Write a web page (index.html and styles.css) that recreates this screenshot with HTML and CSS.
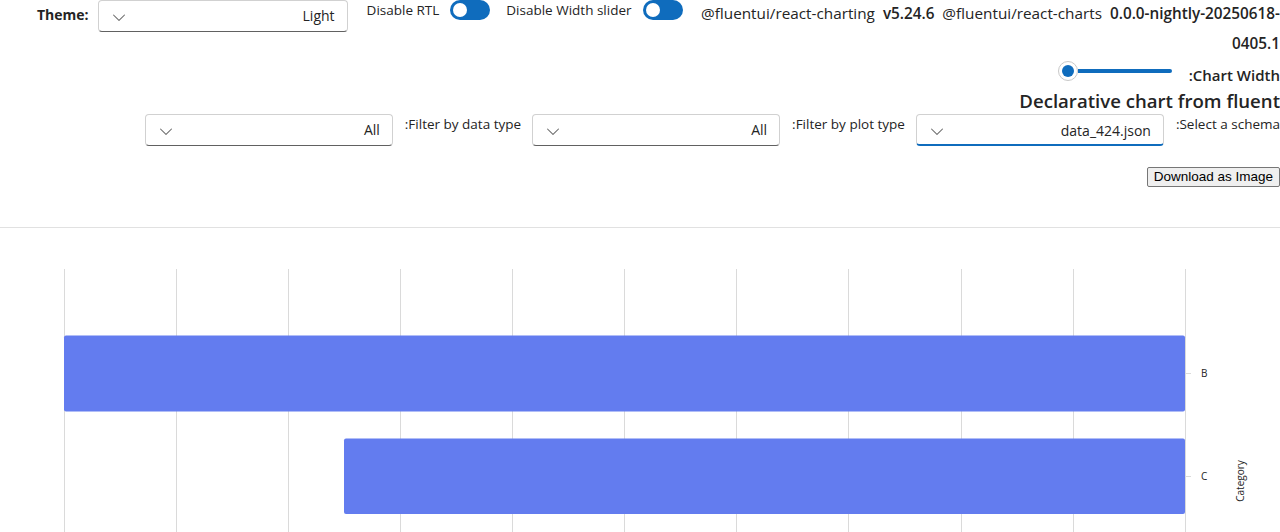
FILE: index.html
```html
<!DOCTYPE html>
<html>
<head>
<meta charset="utf-8">
<link rel="stylesheet" href="styles.css">
</head>
<body>
<div class="top">
  <span class="theme-label">Theme:</span>
  <div class="dropdown theme-dd">
    <svg class="chev" width="20" height="20" viewBox="0 0 20 20"><path d="M15.85 7.65a.5.5 0 0 1 0 .7l-5.5 5.5a.5.5 0 0 1-.7 0l-5.5-5.5a.5.5 0 0 1 .7-.7L10 12.79l5.15-5.14a.5.5 0 0 1 .7 0Z" fill="#616161"/></svg>
    <span class="dd-value">Light</span>
  </div>
  <div class="switch-group">
    <span>Disable RTL</span>
    <span class="switch"><span class="knob"></span></span>
  </div>
  <div class="switch-group">
    <span>Disable Width slider</span>
    <span class="switch"><span class="knob"></span></span>
  </div>
  <div class="versions">@fluentui/react-charting&nbsp; <b>v5.24.6</b>&nbsp; @fluentui/react-charts&nbsp; <b>0.0.0-nightly-20250618-0405.1</b></div>
</div>

<div class="slider-row">
  <div class="slider">
    <span class="thumb"><span class="thumb-dot"></span></span>
    <span class="track"></span>
  </div>
  <span class="slider-label">:Chart Width</span>
</div>

<h2 class="title">Declarative chart from fluent</h2>

<div class="filters">
  <div class="dropdown filter-dd">
    <svg class="chev" width="20" height="20" viewBox="0 0 20 20"><path d="M15.85 7.65a.5.5 0 0 1 0 .7l-5.5 5.5a.5.5 0 0 1-.7 0l-5.5-5.5a.5.5 0 0 1 .7-.7L10 12.79l5.15-5.14a.5.5 0 0 1 .7 0Z" fill="#616161"/></svg>
    <span class="dd-value">All</span>
  </div>
  <span class="filter-label">:Filter by data type</span>
  <div class="dropdown filter-dd">
    <svg class="chev" width="20" height="20" viewBox="0 0 20 20"><path d="M15.85 7.65a.5.5 0 0 1 0 .7l-5.5 5.5a.5.5 0 0 1-.7 0l-5.5-5.5a.5.5 0 0 1 .7-.7L10 12.79l5.15-5.14a.5.5 0 0 1 .7 0Z" fill="#616161"/></svg>
    <span class="dd-value">All</span>
  </div>
  <span class="filter-label">:Filter by plot type</span>
  <div class="dropdown filter-dd focused">
    <svg class="chev" width="20" height="20" viewBox="0 0 20 20"><path d="M15.85 7.65a.5.5 0 0 1 0 .7l-5.5 5.5a.5.5 0 0 1-.7 0l-5.5-5.5a.5.5 0 0 1 .7-.7L10 12.79l5.15-5.14a.5.5 0 0 1 .7 0Z" fill="#616161"/></svg>
    <span class="dd-value">data_424.json</span>
  </div>
  <span class="filter-label">:Select a schema</span>
</div>

<div class="download-row">
  <button class="download">Download as Image</button>
</div>

<hr class="divider">

<svg class="chart" width="1280" height="310" viewBox="0 0 1280 310">
  <g stroke="#dadada" stroke-width="1">
    <line x1="64.5" y1="40" x2="64.5" y2="310"/>
    <line x1="176.5" y1="40" x2="176.5" y2="310"/>
    <line x1="288.5" y1="40" x2="288.5" y2="310"/>
    <line x1="400.5" y1="40" x2="400.5" y2="310"/>
    <line x1="512.5" y1="40" x2="512.5" y2="310"/>
    <line x1="624.5" y1="40" x2="624.5" y2="310"/>
    <line x1="736.5" y1="40" x2="736.5" y2="310"/>
    <line x1="848.5" y1="40" x2="848.5" y2="310"/>
    <line x1="961.5" y1="40" x2="961.5" y2="310"/>
    <line x1="1073.5" y1="40" x2="1073.5" y2="310"/>
    <line x1="1185.5" y1="40" x2="1185.5" y2="310"/>
    <line x1="1185" y1="144.5" x2="1191" y2="144.5"/>
    <line x1="1185" y1="247.5" x2="1191" y2="247.5"/>
  </g>
  <rect x="64" y="106.5" width="1121" height="76" rx="2" fill="#637cef"/>
  <rect x="344" y="209.5" width="841" height="75.5" rx="2" fill="#637cef"/>
  <text x="1201" y="148" class="tick">B</text>
  <text x="1201" y="251" class="tick">C</text>
  <text class="axis-title" transform="translate(1244 252) rotate(-90)" text-anchor="middle">Category</text>
</svg>
</body>
</html>
```

FILE: styles.css
```css
html, body {
  margin: 0;
  padding: 0;
  background: #ffffff;
}
body {
  font-family: "Open Sans", "Noto Sans", sans-serif;
  font-size: 13.5px;
  color: #242424;
  width: 1280px;
  overflow: hidden;
}

.top {
  display: flex;
  align-items: flex-start;
  height: 60px;
}
.theme-label {
  font-weight: 700;
  font-size: 14px;
  margin-left: 37px;
  margin-top: 5px;
  line-height: 20px;
}
.dropdown {
  box-sizing: border-box;
  height: 32px;
  border: 1px solid #d1d1d1;
  border-bottom-color: #616161;
  border-radius: 4px;
  display: flex;
  align-items: center;
  justify-content: space-between;
  padding: 0 12px 0 10px;
  background: #fff;
}
.theme-dd {
  width: 250px;
  margin-left: 9px;
}
.chev {
  display: block;
  margin-top: 1px;
}
.dd-value {
  line-height: 20px;
  font-size: 14px;
  color: #242424;
}
.switch-group {
  display: flex;
  align-items: flex-start;
  margin-left: 19px;
}
.switch-group + .switch-group {
  margin-left: 16px;
}
.switch-group span:first-child {
  line-height: 20px;
}
.switch {
  display: block;
  box-sizing: border-box;
  width: 40px;
  height: 20px;
  border-radius: 10px;
  background: #0f6cbd;
  margin-left: 11px;
  position: relative;
}
.knob {
  position: absolute;
  left: 3px;
  top: 3px;
  width: 14px;
  height: 14px;
  border-radius: 50%;
  background: #fff;
}
.versions {
  margin-left: 14px;
  flex: 1;
  text-align: right;
  font-size: 15.3px;
  line-height: 30px;
  margin-top: -2px;
}
.versions b {
  font-weight: 600;
}

.slider-row {
  display: flex;
  justify-content: flex-end;
  align-items: center;
  height: 24px;
}
.slider {
  display: flex;
  align-items: center;
  width: 114px;
  height: 20px;
  margin-top: -2px;
}
.thumb {
  box-sizing: border-box;
  width: 20px;
  height: 20px;
  border-radius: 50%;
  border: 1px solid #c8c8c8;
  background: #fff;
  display: flex;
  align-items: center;
  justify-content: center;
  flex: none;
}
.thumb-dot {
  width: 12px;
  height: 12px;
  border-radius: 50%;
  background: #0f6cbd;
}
.track {
  height: 4px;
  background: #0f6cbd;
  flex: 1;
  border-radius: 0 2px 2px 0;
}
.slider-label {
  font-weight: 600;
  font-size: 15px;
  margin-left: 17px;
  margin-top: 6px;
  line-height: 20px;
}

.title {
  margin: 3px 0 0 0;
  text-align: right;
  font-size: 18.6px;
  font-weight: 600;
  line-height: 28px;
}

.filters {
  display: flex;
  justify-content: flex-end;
  align-items: flex-start;
  margin-top: -1px;
}
.filter-dd {
  width: 248px;
}
.filter-label {
  margin-left: 12px;
  margin-right: 11px;
  line-height: 20px;
}
.filter-label:last-child {
  margin-right: 0;
}
.focused {
  border-bottom: 2px solid #0f6cbd;
}
.focused .dd-value,
.focused .chev {
  margin-top: 2px;
}

.download-row {
  display: flex;
  justify-content: flex-end;
  margin-top: 20px;
}
.download {
  font-family: "Liberation Sans", Arial, sans-serif;
  font-size: 13.5px;
  background: #efefef;
  border: 1px solid #767676;
  border-radius: 2px;
  padding: 1px 6px;
  color: #000;
  height: 20px;
  line-height: 16px;
  margin-top: 1px;
}

.divider {
  border: 0;
  border-top: 1px solid #e1e1e1;
  margin: 40px 0 0 0;
  height: 0;
}

.chart {
  display: block;
  margin-top: 1px;
}
.tick {
  font-family: "Open Sans", sans-serif;
  font-size: 10px;
  fill: #242424;
}
.axis-title {
  font-family: "Open Sans", sans-serif;
  font-size: 10px;
  fill: #242424;
}
```
